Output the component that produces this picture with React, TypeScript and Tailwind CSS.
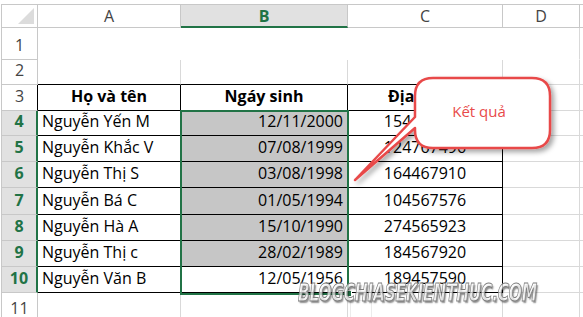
import { FC } from "react";

const GRID = "border-[#d9d9d9]";
const FONT = "font-['Open_Sans',sans-serif]";

interface RowData {
  num: number;
  height: string;
  name?: string;
  date?: string;
  code?: string;
  header?: boolean;
  picked?: boolean;
  filled?: boolean;
}

const rows: RowData[] = [
  { num: 1, height: "h-[32px]" },
  { num: 2, height: "h-[25px]" },
  { num: 3, height: "h-[26px]", name: "Họ và tên", date: "Ngáy sinh", code: "Địa chỉ", header: true },
  { num: 4, height: "h-[25px]", name: "Nguyễn Yến M", date: "12/11/2000", code: "154467896", picked: true, filled: true },
  { num: 5, height: "h-[26px]", name: "Nguyễn Khắc V", date: "07/08/1999", code: "124767496", picked: true, filled: true },
  { num: 6, height: "h-[26px]", name: "Nguyễn Thị S", date: "03/08/1998", code: "164467910", picked: true, filled: true },
  { num: 7, height: "h-[27px]", name: "Nguyễn Bá C", date: "01/05/1994", code: "104567576", picked: true, filled: true },
  { num: 8, height: "h-[26px]", name: "Nguyễn Hà A", date: "15/10/1990", code: "274565923", picked: true, filled: true },
  { num: 9, height: "h-[26px]", name: "Nguyễn Thị c", date: "28/02/1989", code: "184567920", picked: true, filled: true },
  { num: 10, height: "h-[26px]", name: "Nguyễn Văn B", date: "12/05/1956", code: "189457590", picked: true },
  { num: 11, height: "h-[30px]" },
];

const ColumnHeader: FC = () => (
  <div className={`flex h-[24px] border-t border-[#c8c8c8] text-[16px] text-[#444] ${FONT}`}>
    <div className="relative w-[36px] shrink-0 border-r border-b border-[#c8c8c8]">
      <svg className="absolute right-[3px] bottom-[3px]" width="16" height="16" viewBox="0 0 16 16">
        <polygon points="16,0 16,16 0,16" fill="#dcdcdc" />
      </svg>
    </div>
    <div className="flex w-[143px] shrink-0 items-center justify-center border-r border-b border-[#c8c8c8]">A</div>
    <div className="flex w-[167px] shrink-0 items-center justify-center border-r border-b-2 border-r-[#c8c8c8] border-b-[#217346] bg-[#e1e1e1] font-bold text-[#217346]">
      B
    </div>
    <div className="flex w-[155px] shrink-0 items-center justify-center border-r border-b border-[#c8c8c8]">C</div>
    <div className="flex w-[77px] shrink-0 items-center justify-center border-r border-b border-[#c8c8c8]">D</div>
    <div className="flex-1 border-b border-[#c8c8c8]" />
  </div>
);

const SheetRow: FC<{ row: RowData }> = ({ row }) => {
  const inTable = row.num >= 3 && row.num <= 10;
  const blank = row.num === 1;
  const topEdge = row.num === 2;
  const cellBorder = inTable || topEdge ? "border-b-black" : blank ? "border-b-transparent" : "border-b-[#d9d9d9]";
  const sideBorder = inTable ? "border-r-black" : blank ? "border-r-transparent" : "border-r-[#d9d9d9]";

  return (
    <div className={`flex ${row.height} text-[16px] leading-[26px] ${FONT}`}>
      <div
        className={`flex w-[36px] shrink-0 items-end justify-center border-b pb-[1px] ${
          row.picked
            ? "border-r-2 border-b-[#c8c8c8] border-r-[#217346] bg-[#e1e1e1] font-bold text-[#217346]"
            : row.num === 3
              ? "border-r border-b-[#c8c8c8] border-r-black text-[#444]"
              : "border-r border-[#c8c8c8] text-[#444]"
        }`}
      >
        {row.num}
      </div>
      <div
        className={`flex w-[143px] shrink-0 items-end border-r border-b pb-[1px] text-black ${cellBorder} ${sideBorder} ${
          row.header ? "justify-center font-bold" : "pl-[4px]"
        }`}
      >
        {row.name}
      </div>
      <div
        className={`flex w-[167px] shrink-0 items-end border-r border-b pb-[1px] text-black ${cellBorder} ${sideBorder} ${
          row.header ? "justify-center font-bold" : "justify-end pr-[4px]"
        } ${row.filled ? "bg-[#c6c6c6]" : ""}`}
      >
        {row.date}
      </div>
      <div
        className={`flex w-[155px] shrink-0 items-end overflow-hidden border-r border-b pb-[1px] whitespace-nowrap text-black ${cellBorder} ${sideBorder} ${
          row.header ? "justify-start pl-[40px] font-bold" : "justify-center"
        }`}
      >
        {row.code}
      </div>
      <div
        className={`w-[77px] shrink-0 border-r border-b ${blank ? "border-b-transparent border-r-[#d9d9d9]" : GRID}`}
      />
      <div className={`flex-1 border-b ${blank ? "border-transparent" : GRID}`} />
    </div>
  );
};

const Callout: FC = () => (
  <svg className="pointer-events-none absolute top-0 left-0" width="583" height="317" viewBox="0 0 583 317">
    <defs>
      <filter id="shade" x="-20%" y="-20%" width="140%" height="140%">
        <feDropShadow dx="3" dy="3" stdDeviation="2.5" floodColor="#000" floodOpacity="0.35" />
      </filter>
    </defs>
    <path
      d="M433 78 H532 Q550 78 550 96 V130 Q550 148 532 148 H433 Q415 148 415 130 V128 L355 180 L415 117 V96 Q415 78 433 78 Z"
      fill="#fff"
      stroke="#e84a4a"
      strokeWidth="2.5"
      strokeLinejoin="round"
      filter="url(#shade)"
    />
    <text x="479" y="117" textAnchor="middle" fontFamily="'Open Sans', sans-serif" fontSize="15" fill="#e84a4a">
      Kết quả
    </text>
  </svg>
);

const App: FC = () => {
  return (
    <div className="relative h-[317px] w-[583px] overflow-hidden bg-white pt-[4px]">
      <div className="ml-[1px] border-l border-[#c8c8c8]">
        <ColumnHeader />
        {rows.map((row) => (
          <SheetRow key={row.num} row={row} />
        ))}
      </div>

      {/* selection box B4:B10 */}
      <div className="pointer-events-none absolute top-[110px] left-[180px] h-[185px] w-[169px] border-2 border-[#217346]" />
      <div className="absolute top-[290px] left-[345px] h-[7px] w-[7px] border border-white bg-[#217346]" />

      {/* quick analysis ghost */}
      <div className="absolute top-[300px] left-[350px] h-[20px] w-[22px] rounded-[2px] border border-[#ececec]" />

      <Callout />

      <div className="pointer-events-none absolute top-[274px] left-[298px] origin-left scale-x-[0.62] whitespace-nowrap font-['DejaVu_Sans',sans-serif] text-[25px] font-bold italic tracking-[-0.5px] text-white/70 [-webkit-text-stroke:1px_#7d7d7d] [text-shadow:2px_2px_2px_rgba(0,0,0,0.45)]">
        BLOGCHIASEKIENTHUC.COM
      </div>
    </div>
  );
};

export default App;
